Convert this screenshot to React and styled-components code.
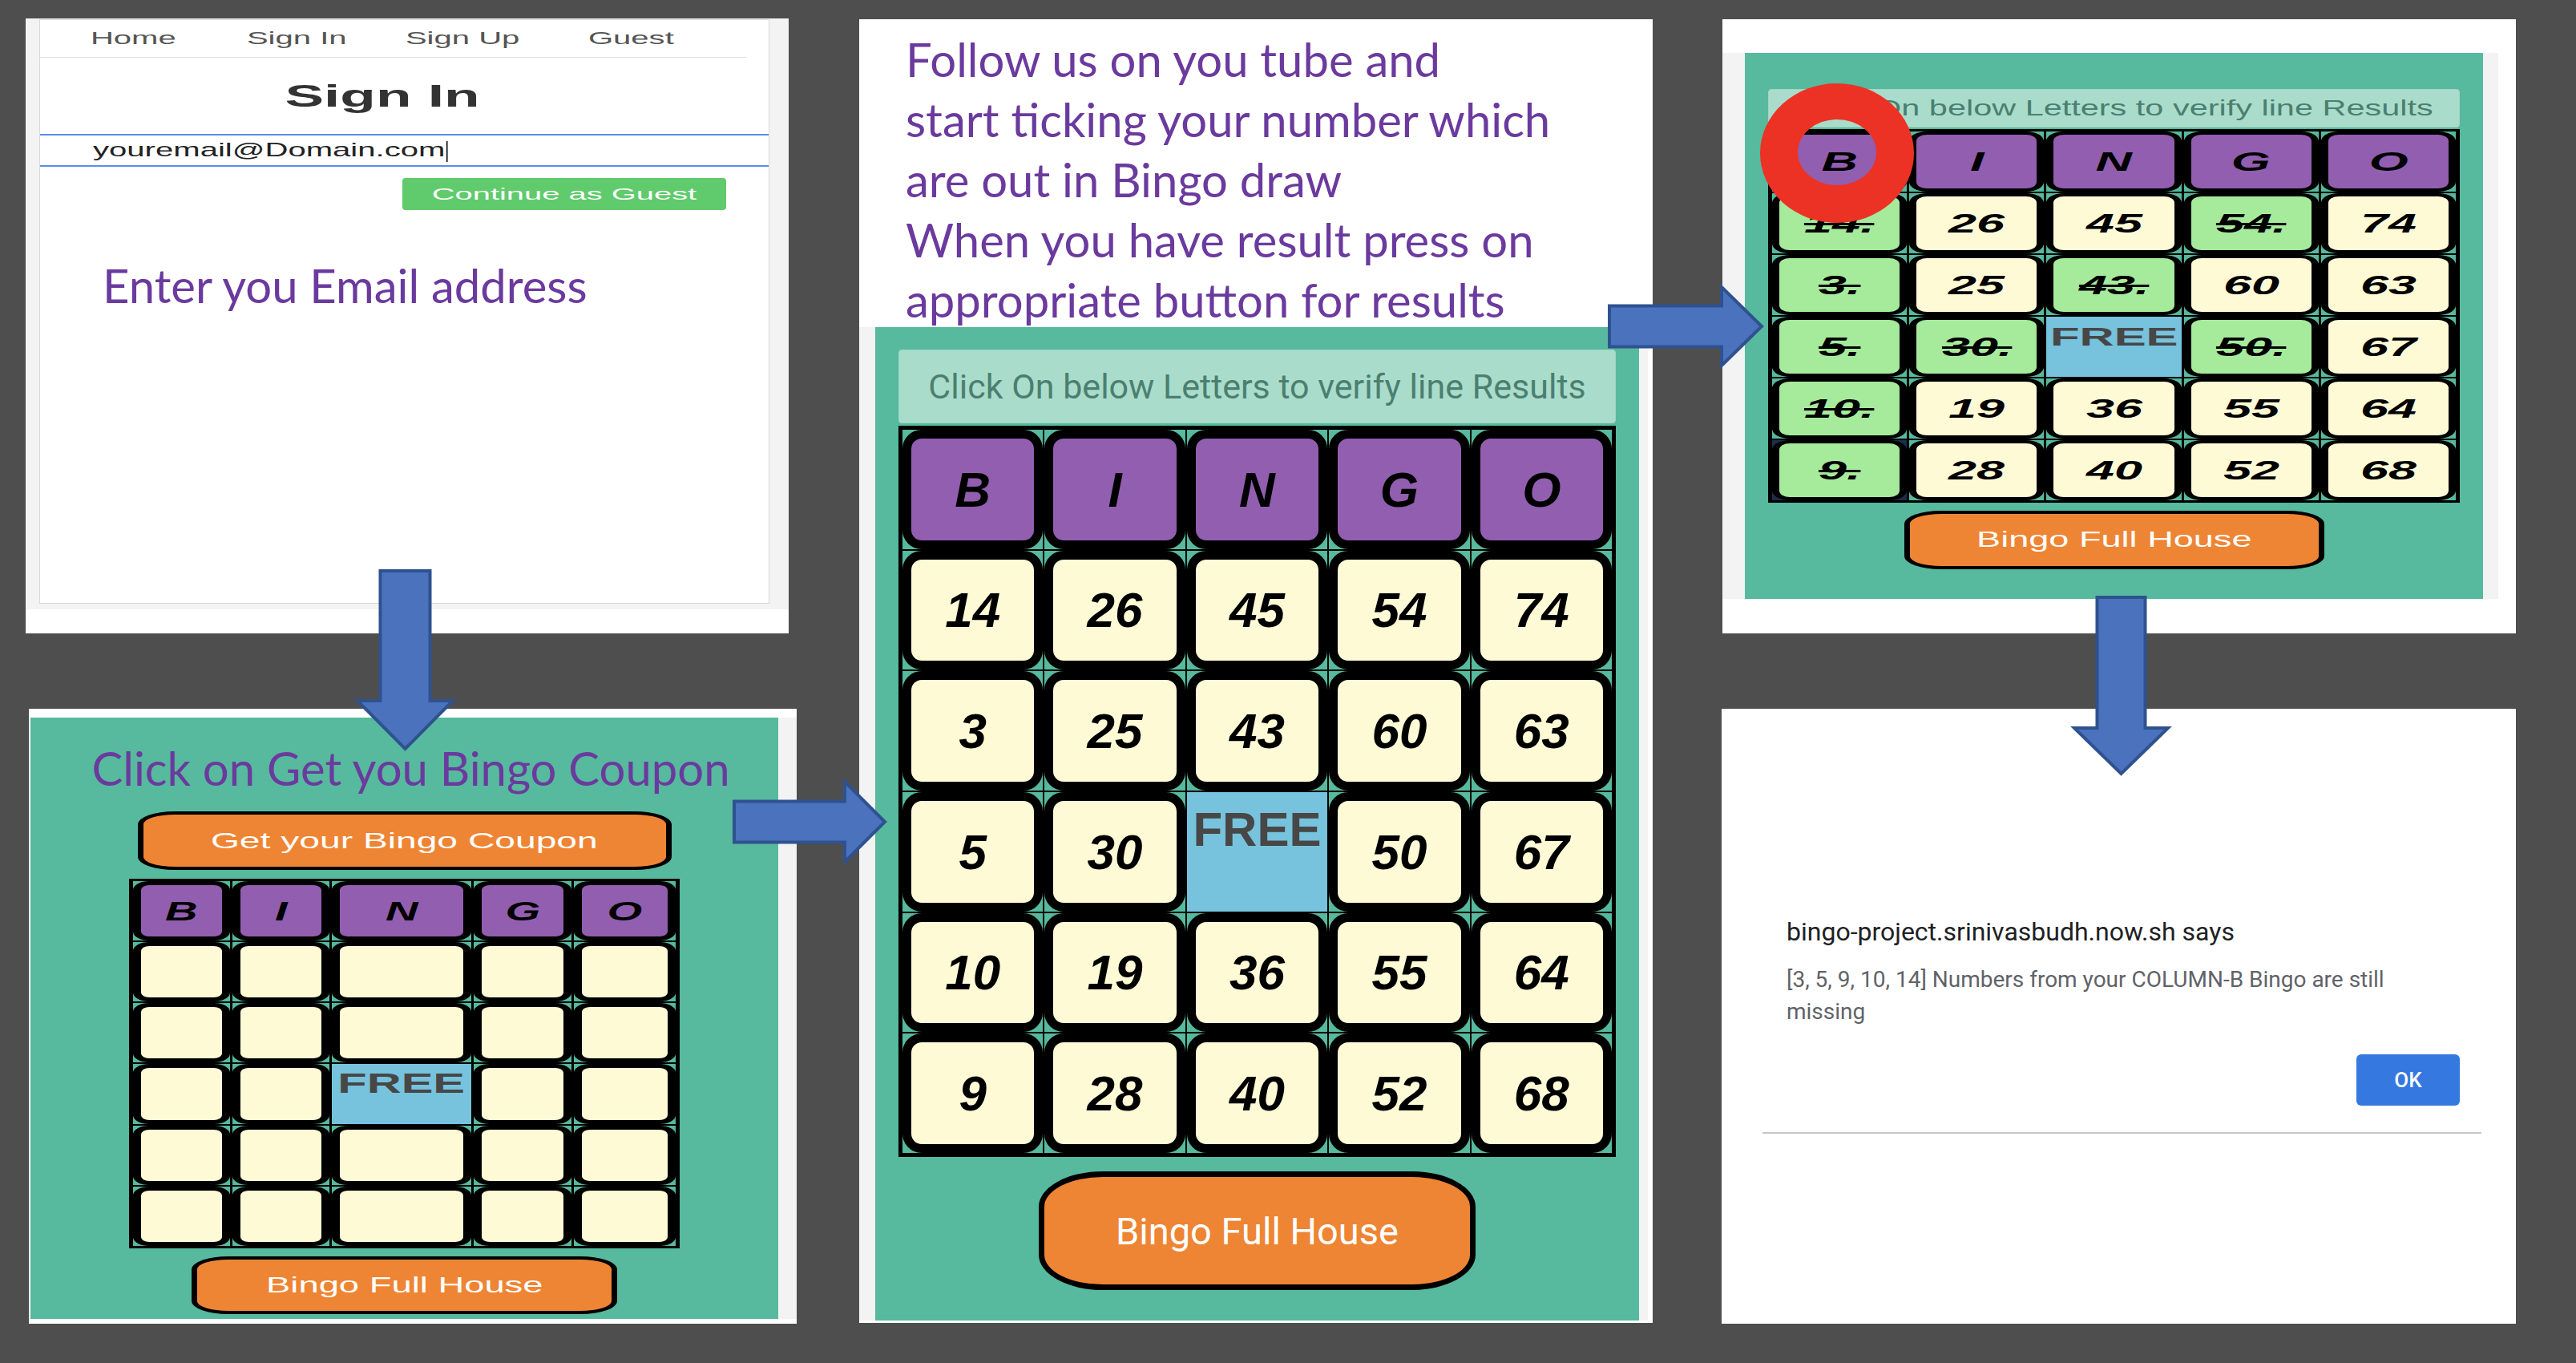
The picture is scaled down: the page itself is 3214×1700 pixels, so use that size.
import React from 'react'
import styled, { createGlobalStyle } from 'styled-components'

const TEAL = '#57b99d'
const CREAM = '#fffad6'
const PURPLE = '#925eb0'
const GREEN = '#a6ea9c'
const SKY = '#77c2dc'
const ORANGE = '#ee8534'
const INK = '#6b3a9e'
const PAPER = '#f3f3f3'
const ARIAL = '"Liberation Sans", Arial, sans-serif'
const ROBOTO = 'Roboto, "Liberation Sans", sans-serif'

const GlobalStyle = createGlobalStyle`
  html, body { margin: 0; padding: 0; background: #4e4e4e; }
  body { font-family: ${ARIAL}; }
`

const Desk = styled.main`
  position: relative;
  width: 3214px;
  height: 1700px;
  overflow: hidden;
  background: #4e4e4e;
`

// each screenshot sits on the canvas like a window on a desktop
const Shot = styled.section`
  position: absolute;
  left: ${p => p.$x}px;
  top: ${p => p.$y}px;
  width: ${p => p.$w}px;
  height: ${p => p.$h}px;
  padding-top: ${p => p.$pt || 0}px;
  box-sizing: border-box;
  background: #fff;
  display: flex;
  flex-direction: column;
`

const Wide = styled.span`
  display: inline-block;
  white-space: nowrap;
  transform: scaleX(${p => p.$sx || 1});
  transform-origin: ${p => p.$origin || 'center'};
`

const Note = styled.p`
  margin: 0;
  font-family: Lato, "Open Sans", sans-serif;
  font-size: 58px;
  line-height: 1.2;
  color: ${INK};
  white-space: nowrap;
`

/* ---------- sign in screenshot ---------- */

const Backdrop = styled.div`
  height: 737px;
  box-sizing: border-box;
  padding: 1px 0 0 17px;
  background: ${PAPER};
`

const Card = styled.div`
  width: 911px;
  height: 729px;
  box-sizing: border-box;
  border: 1px solid #d9d9d9;
  background: #fff;
  display: flex;
  flex-direction: column;
`

const NavBar = styled.nav`
  display: grid;
  grid-template-columns: 207px 200px 214px 207px;
  align-items: center;
  justify-items: center;
  height: 46px;
  margin-right: 28px;
  padding-left: 13px;
  border-bottom: 1px solid #e2e2e2;
  font-size: 22px;
  color: #555;
`

const PageTitle = styled.h1`
  margin: 0;
  height: 95px;
  display: flex;
  align-items: center;
  justify-content: center;
  padding-right: 56px;
  font-size: 39px;
  font-weight: 700;
  color: #333;
`

const EmailField = styled.div`
  height: 41px;
  box-sizing: border-box;
  border-top: 2px solid #5b8ee6;
  border-bottom: 2px solid #5b8ee6;
  display: flex;
  align-items: center;
  padding-left: 66px;
  font-size: 24px;
  color: #222;
`

const Typed = styled(Wide)`
  &::after {
    content: '';
    display: inline-block;
    width: 1px;
    height: 26px;
    margin-left: 1px;
    vertical-align: middle;
    background: #111;
  }
`

const ActionRow = styled.div`
  display: flex;
  justify-content: flex-end;
  padding-right: 53px;
  margin-top: 14px;
`

const GuestButton = styled.button`
  width: 404px;
  height: 40px;
  padding: 0;
  border: 0;
  border-radius: 4px;
  background: #5fcb6c;
  color: #fff;
  font: 21px ${ARIAL};
  display: flex;
  align-items: center;
  justify-content: center;
`

const EmailNote = styled(Note)`
  margin-top: 59px;
  padding-left: 78px;
`

/* ---------- shared bingo pieces ---------- */

const Band = styled.div`
  display: flex;
  height: ${p => p.$h}px;
  flex-shrink: 0;
`

const Strip = styled.div`
  width: ${p => p.$w}px;
  background: ${PAPER};
  flex-shrink: 0;
`

const Felt = styled.div`
  width: ${p => p.$w}px;
  margin-left: ${p => p.$ml || 0}px;
  padding-top: ${p => p.$pt || 0}px;
  box-sizing: border-box;
  background: ${TEAL};
  display: flex;
  flex-direction: column;
  align-items: center;
  flex-shrink: 0;
`

const Banner = styled.div`
  width: ${p => p.$w}px;
  height: ${p => p.$h}px;
  box-sizing: border-box;
  border: 1px solid #9fd6c4;
  border-radius: 4px;
  background: #aadccc;
  color: #4b7f6f;
  display: flex;
  align-items: center;
  justify-content: center;
  font-family: ${p => p.$font};
  font-size: ${p => p.$fs}px;
  overflow: hidden;
  flex-shrink: 0;
`

const Pill = styled.button`
  width: ${p => p.$w}px;
  height: ${p => p.$h}px;
  margin-top: ${p => p.$mt || 0}px;
  padding: 0;
  box-sizing: border-box;
  background: ${ORANGE};
  border: solid #000;
  border-width: ${p => p.$bw};
  border-radius: ${p => p.$br};
  color: #fff;
  font-family: ${p => p.$font};
  font-size: ${p => p.$fs}px;
  display: flex;
  align-items: center;
  justify-content: center;
  flex-shrink: 0;
`

const Board = styled.div`
  display: grid;
  grid-template-columns: ${p => p.$s.cols};
  grid-template-rows: repeat(6, minmax(0, 1fr));
  gap: ${p => p.$s.gap};
  padding: ${p => p.$s.pad};
  width: ${p => p.$s.w}px;
  height: ${p => p.$s.h}px;
  margin-top: ${p => p.$s.mt}px;
  box-sizing: border-box;
  background: #000;
  flex-shrink: 0;
`

const Slot = styled.div`
  display: flex;
  min-width: 0;
  min-height: 0;
  background: ${p => (p.$focus ? '#1d2c4c' : TEAL)};
`

const faceColors = { head: PURPLE, mark: GREEN, plain: CREAM }

const Face = styled.div`
  flex: 1;
  box-sizing: border-box;
  display: flex;
  align-items: center;
  justify-content: center;
  border: solid #000;
  border-width: ${p => p.$s.bw};
  border-radius: ${p => p.$s.br};
  background: ${p => faceColors[p.$kind]};
  font-family: ${ARIAL};
  font-weight: 700;
  font-style: italic;
  font-size: ${p => p.$s.fs}px;
  color: #000;
`

const FreeFace = styled.div`
  flex: 1;
  display: flex;
  justify-content: center;
  align-items: flex-start;
  padding-top: ${p => p.$s.freePt}px;
  background: ${SKY};
  font: 700 ${p => p.$s.freeFs}px ${ARIAL};
  color: #474747;
  overflow: hidden;
`

const Struck = styled.span`
  text-decoration: line-through;
  text-decoration-thickness: 3px;
`

function BingoBoard({ s, rows, marks = [], focus }) {
  return (
    <Board $s={s}>
      {'BINGO'.split('').map(l => (
        <Slot key={l}>
          <Face $s={s} $kind="head"><Wide $sx={s.sx}>{l}</Wide></Face>
        </Slot>
      ))}
      {rows.flatMap((row, r) => row.map((n, c) => {
        const key = r + '-' + c
        if (n === 'FREE') {
          return (
            <Slot key={key}>
              <FreeFace $s={s}><Wide $sx={s.freeSx}>FREE</Wide></FreeFace>
            </Slot>
          )
        }
        if (n === null) return <Slot key={key}><Face $s={s} $kind="plain" /></Slot>
        const marked = marks.includes(n)
        return (
          <Slot key={key} $focus={focus === n}>
            <Face $s={s} $kind={marked ? 'mark' : 'plain'}>
              <Wide $sx={s.sx}>{marked ? <Struck>{n}.</Struck> : n}</Wide>
            </Face>
          </Slot>
        )
      }))}
    </Board>
  )
}

const CARD = [
  [14, 26, 45, 54, 74],
  [3, 25, 43, 60, 63],
  [5, 30, 'FREE', 50, 67],
  [10, 19, 36, 55, 64],
  [9, 28, 40, 52, 68],
]

const BLANK = [0, 1, 2, 3, 4].map(r => [0, 1, 2, 3, 4].map(c => (r === 2 && c === 2 ? 'FREE' : null)))

const smallBoard = {
  w: 687, h: 461, mt: 11, pad: '3px 5px', gap: '2px 3px',
  cols: '121px 121px 174px 122px 127px', bw: '5px 10px', br: '20px / 11px',
  fs: 34, sx: 1.65, freeFs: 35, freeSx: 1.7, freePt: 4,
}

const bigBoard = {
  w: 895, h: 912, mt: 3, pad: '5px', gap: '2px',
  cols: 'repeat(5, minmax(0, 1fr))', bw: '11px', br: '24px',
  fs: 62, sx: 1, freeFs: 60, freeSx: 1, freePt: 12,
}

const flatBoard = {
  w: 863, h: 466, mt: 2, pad: '3px 5px', gap: '2px 3px',
  cols: 'repeat(5, minmax(0, 1fr))', bw: '4px 9px', br: '22px / 12px',
  fs: 34, sx: 1.85, freeFs: 32, freeSx: 1.87, freePt: 7,
}

/* ---------- coupon screenshot ---------- */

const CouponTitle = styled(Note)`
  align-self: stretch;
  height: 117px;
  box-sizing: border-box;
  padding: 28px 0 0 16px;
  text-align: center;
`

/* ---------- instructions screenshot ---------- */

const Steps = styled(Note)`
  height: 384px;
  box-sizing: border-box;
  padding: 12px 0 0 58px;
  line-height: 75px;
  flex-shrink: 0;
`

/* ---------- alert screenshot ---------- */

const AlertTitle = styled.div`
  padding-left: 81px;
  font: 32px/37px ${ROBOTO};
  color: #202124;
`

const AlertText = styled.div`
  width: 800px;
  margin-top: 21px;
  padding-left: 81px;
  font: 28px/40px ${ROBOTO};
  color: #5f6368;
`

const AlertActions = styled.div`
  display: flex;
  justify-content: flex-end;
  margin-top: 33px;
  padding-right: 70px;
`

const OkButton = styled.button`
  width: 129px;
  height: 64px;
  padding: 0;
  border: 0;
  border-radius: 6px;
  background: #3578e0;
  color: #fff;
  font: 500 26px ${ROBOTO};
`

const Rule = styled.hr`
  width: 897px;
  height: 2px;
  margin: 33px 0 0 51px;
  border: 0;
  background: #c6c6c6;
`

/* ---------- overlays ---------- */

const Overlay = styled.svg`
  position: absolute;
  left: ${p => p.$x}px;
  top: ${p => p.$y}px;
  overflow: visible;
  pointer-events: none;
`

function DownArrow({ x, y, w, h, shaft, head }) {
  const a = (w - shaft) / 2, b = a + shaft, k = h - head, e = 2
  const pts = `${a},${e} ${b},${e} ${b},${k} ${w - e},${k} ${w / 2},${h - e} ${e},${k} ${a},${k}`
  return (
    <Overlay $x={x} $y={y} width={w} height={h}>
      <polygon points={pts} fill="#4a72bd" stroke="#2f528f" strokeWidth="4" />
    </Overlay>
  )
}

function RightArrow({ x, y, w, h, shaft, head }) {
  const a = (h - shaft) / 2, b = a + shaft, k = w - head, e = 2
  const pts = `${e},${a} ${k},${a} ${k},${e} ${w - e},${h / 2} ${k},${h - e} ${k},${b} ${e},${b}`
  return (
    <Overlay $x={x} $y={y} width={w} height={h}>
      <polygon points={pts} fill="#4a72bd" stroke="#2f528f" strokeWidth="4" />
    </Overlay>
  )
}

function Ring() {
  return (
    <Overlay $x={2196} $y={104} width={192} height={174}>
      <path
        fillRule="evenodd"
        fill="#ec3224"
        d="M0,87 a96,87 0 1,0 192,0 a96,87 0 1,0 -192,0 Z M47,86 a49,41 0 1,0 98,0 a49,41 0 1,0 -98,0 Z"
      />
    </Overlay>
  )
}

export default function App() {
  return (
    <Desk>
      <GlobalStyle />

      <Shot $x={32} $y={23} $w={952} $h={767}>
        <Backdrop>
          <Card>
            <NavBar>
              {['Home', 'Sign In', 'Sign Up', 'Guest'].map(t => (
                <Wide key={t} $sx={1.82}>{t}</Wide>
              ))}
            </NavBar>
            <PageTitle><Wide $sx={1.87}>Sign In</Wide></PageTitle>
            <EmailField>
              <Typed $sx={1.67} $origin="left">youremail@Domain.com</Typed>
            </EmailField>
            <ActionRow>
              <GuestButton><Wide $sx={1.9}>Continue as Guest</Wide></GuestButton>
            </ActionRow>
            <EmailNote>Enter you Email address</EmailNote>
          </Card>
        </Backdrop>
      </Shot>

      <Shot $x={36} $y={884} $w={958} $h={767} $pt={11}>
        <Band $h={750}>
          <Felt $w={933} $ml={2}>
            <CouponTitle>Click on Get you Bingo Coupon</CouponTitle>
            <Pill $w={666} $h={73} $bw="4px 7px" $br="46px / 16px" $font={ARIAL} $fs={28}>
              <Wide $sx={1.65}>Get your Bingo Coupon</Wide>
            </Pill>
            <BingoBoard s={smallBoard} rows={BLANK} />
            <Pill $w={531} $h={72} $mt={10} $bw="4px 7px" $br="46px / 16px" $font={ARIAL} $fs={27}>
              <Wide $sx={1.68}>Bingo Full House</Wide>
            </Pill>
          </Felt>
          <Strip $w={23} />
        </Band>
      </Shot>

      <Shot $x={1072} $y={24} $w={990} $h={1626}>
        <Steps>
          Follow us on you tube and<br />
          start ticking your number which<br />
          are out in Bingo draw<br />
          When you have result press on<br />
          appropriate button for results
        </Steps>
        <Band $h={1239}>
          <Strip $w={20} />
          <Felt $w={953} $pt={28}>
            <Banner $w={895} $h={92} $font={ROBOTO} $fs={43}>
              Click On below Letters to verify line Results
            </Banner>
            <BingoBoard s={bigBoard} rows={CARD} />
            <Pill $w={545} $h={148} $mt={18} $bw="7px" $br="80px / 44px" $font={ROBOTO} $fs={47}>
              Bingo Full House
            </Pill>
          </Felt>
          <Strip $w={11} />
        </Band>
      </Shot>

      <Shot $x={2149} $y={24} $w={990} $h={766} $pt={42}>
        <Band $h={681}>
          <Strip $w={28} />
          <Felt $w={921} $pt={45}>
            <Banner $w={863} $h={48} $font={ARIAL} $fs={28}>
              <Wide $sx={1.48}>Click On below Letters to verify line Results</Wide>
            </Banner>
            <BingoBoard s={flatBoard} rows={CARD} marks={[14, 3, 5, 10, 9, 54, 43, 30, 50]} focus={9} />
            <Pill $w={524} $h={73} $mt={10} $bw="4px 7px" $br="46px / 16px" $font={ARIAL} $fs={27}>
              <Wide $sx={1.67}>Bingo Full House</Wide>
            </Pill>
          </Felt>
          <Strip $w={19} />
        </Band>
      </Shot>

      <Shot $x={2148} $y={884} $w={991} $h={767} $pt={260}>
        <AlertTitle>bingo-project.srinivasbudh.now.sh says</AlertTitle>
        <AlertText>[3, 5, 9, 10, 14] Numbers from your COLUMN-B Bingo are still missing</AlertText>
        <AlertActions>
          <OkButton>OK</OkButton>
        </AlertActions>
        <Rule />
      </Shot>

      <DownArrow x={444} y={710} w={123} h={226} shaft={62} head={62} />
      <RightArrow x={914} y={973} w={192} h={104} shaft={51} head={52} />
      <RightArrow x={2006} y={356} w={194} h={102} shaft={51} head={52} />
      <DownArrow x={2586} y={743} w={121} h={224} shaft={60} head={59} />
      <Ring />
    </Desk>
  )
}
